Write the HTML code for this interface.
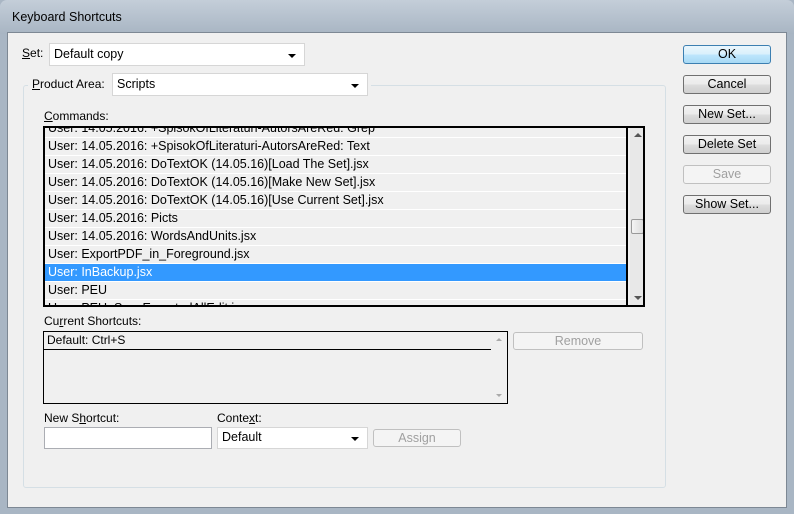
<!DOCTYPE html>
<html><head><style>
*{margin:0;padding:0;box-sizing:border-box}
body{width:794px;height:514px;overflow:hidden;background:#a9b6c4;font-family:"Liberation Sans",sans-serif;font-size:12px;color:#000;position:relative}
.abs{position:absolute}
.title{left:0;top:0;width:794px;height:34px;background:linear-gradient(#c4ced9,#a8b5c3);border-radius:7px 7px 0 0}
.client{left:7px;top:32px;width:780px;height:476px;background:#f0f0f0;border:1px solid #7d8894}
.combo{background:#fff;border:1px solid #d6d6d6;height:23px;padding:3px 4px;font-size:12.5px}
.arrow{position:absolute;right:8px;top:10px;width:0;height:0;border-left:4px solid transparent;border-right:4px solid transparent;border-top:4px solid #000}
.btn{width:88px;height:19px;border:1px solid #707070;border-radius:3px;background:linear-gradient(#f2f2f2,#ebebeb 50%,#dddddd 51%,#cfcfcf);text-align:center;font-size:12.5px;line-height:17px}
.dis{border-color:#c0c0c0;background:#f4f4f4;color:#a0a0a0}
.row{position:absolute;left:0;width:583px;height:18px;border-bottom:1px solid #fff;padding-left:3px;line-height:17px;font-size:12.5px;white-space:nowrap}
u{text-decoration:underline}
</style></head><body>
<div class="abs title"></div>
<div class="abs" style="left:12px;top:10px;font-size:12.5px">Keyboard Shortcuts</div>
<div class="abs client"></div>

<div class="abs" style="left:22px;top:46px"><u>S</u>et:</div>
<div class="abs combo" style="left:49px;top:43px;width:256px">Default copy<span class="arrow"></span></div>

<div class="abs" style="left:23px;top:85px;width:643px;height:403px;border:1px solid #d5dfe5;border-radius:3px"></div>
<div class="abs" style="left:28px;top:73px;width:343px;height:24px;background:#f0f0f0"></div>
<div class="abs" style="left:32px;top:77px"><u>P</u>roduct Area:</div>
<div class="abs combo" style="left:112px;top:73px;width:256px">Scripts<span class="arrow"></span></div>

<div class="abs" style="left:44px;top:109px"><u>C</u>ommands:</div>
<div class="abs" style="left:43px;top:126px;width:602px;height:181px;border:2px solid #000;overflow:hidden;background:#f0f0f0">
 <div style="position:absolute;left:0;top:0;width:583px;height:179px;overflow:hidden;border-right:2px solid #000">
  <div class="row" style="top:-8px">User: 14.05.2016: +SpisokOfLiteraturi-AutorsAreRed: Grep</div>
  <div class="row" style="top:10px">User: 14.05.2016: +SpisokOfLiteraturi-AutorsAreRed: Text</div>
  <div class="row" style="top:28px">User: 14.05.2016: DoTextOK (14.05.16)[Load The Set].jsx</div>
  <div class="row" style="top:46px">User: 14.05.2016: DoTextOK (14.05.16)[Make New Set].jsx</div>
  <div class="row" style="top:64px">User: 14.05.2016: DoTextOK (14.05.16)[Use Current Set].jsx</div>
  <div class="row" style="top:82px">User: 14.05.2016: Picts</div>
  <div class="row" style="top:100px">User: 14.05.2016: WordsAndUnits.jsx</div>
  <div class="row" style="top:118px">User: ExportPDF_in_Foreground.jsx</div>
  <div class="row" style="top:136px;background:#3399ff;color:#fff">User: InBackup.jsx</div>
  <div class="row" style="top:154px">User: PEU</div>
  <div class="row" style="top:172px">User: PEU_SaveExportedAllEdit.jsx</div>
 </div>
 <div style="position:absolute;left:585px;top:0;width:15px;height:179px;background:#e8e8e8">
  <div style="position:absolute;left:4px;top:5px;border-left:4px solid transparent;border-right:4px solid transparent;border-bottom:4px solid #555"></div>
  <div style="position:absolute;left:1px;top:91px;width:13px;height:15px;border:1px solid #999;border-radius:2px;background:linear-gradient(90deg,#f4f4f4,#dcdcdc)"></div>
  <div style="position:absolute;left:4px;top:168px;border-left:4px solid transparent;border-right:4px solid transparent;border-top:4px solid #555"></div>
 </div>
</div>

<div class="abs" style="left:44px;top:314px">Cu<u>r</u>rent Shortcuts:</div>
<div class="abs" style="left:43px;top:331px;width:465px;height:73px;border:1px solid #000;background:#f0f0f0">
 <div style="position:absolute;left:0;top:0;width:447px;height:18px;border-bottom:1px solid #000;padding-left:3px;line-height:17px">Default: Ctrl+S</div>
 <div style="position:absolute;left:452px;top:6px;border-left:3px solid transparent;border-right:3px solid transparent;border-bottom:3px solid #aaa"></div>
 <div style="position:absolute;left:452px;top:62px;border-left:3px solid transparent;border-right:3px solid transparent;border-top:3px solid #aaa"></div>
</div>
<div class="abs btn dis" style="left:513px;top:332px;width:130px;height:18px">Remove</div>

<div class="abs" style="left:44px;top:411px">New S<u>h</u>ortcut:</div>
<div class="abs" style="left:44px;top:427px;width:168px;height:22px;background:#fff;border:1px solid #abadb3"></div>
<div class="abs" style="left:217px;top:411px">Conte<u>x</u>t:</div>
<div class="abs combo" style="left:217px;top:427px;width:151px;height:22px;padding:2px 4px">Default<span class="arrow" style="top:9px"></span></div>
<div class="abs btn dis" style="left:373px;top:429px;width:88px;height:18px">Assign</div>

<div class="abs btn" style="left:683px;top:45px;border-color:#3c7fb1;background:linear-gradient(#eaf6fd,#d9f0fc 50%,#bee6fd 51%,#a7d9f5)">OK</div>
<div class="abs btn" style="left:683px;top:75px">Cancel</div>
<div class="abs btn" style="left:683px;top:105px">New Set...</div>
<div class="abs btn" style="left:683px;top:135px">Delete Set</div>
<div class="abs btn dis" style="left:683px;top:165px">Save</div>
<div class="abs btn" style="left:683px;top:195px">Show Set...</div>
</body></html>
